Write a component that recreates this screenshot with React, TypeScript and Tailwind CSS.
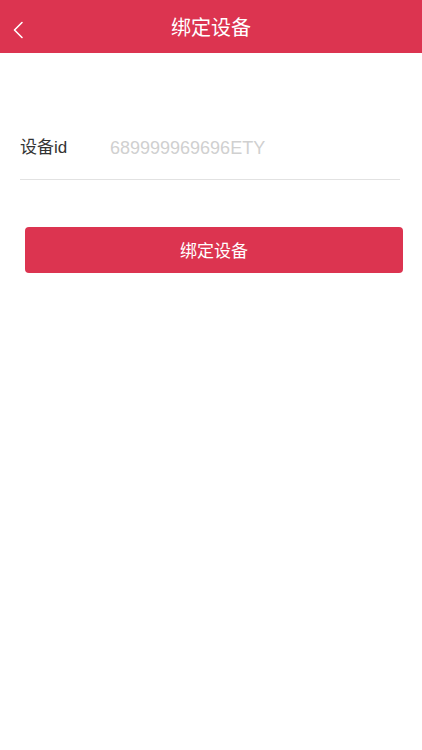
import React from "react";

function BackIcon() {
    return (
        <svg width="12" height="18" viewBox="0 0 12 18" fill="none">
            <path d="M10 1.5 L2.5 9 L10 16.5" stroke="white" strokeWidth="1.6" strokeLinecap="round" strokeLinejoin="round" />
        </svg>
    );
}

export default function App() {
    return (
        <div className="w-[422px] h-[750px] bg-white" style={{ fontFamily: '"Liberation Sans", "Noto Sans CJK SC", sans-serif' }}>
            {/* 顶部导航 */}
            <div className="h-[53px] bg-[#dc3450] flex items-center relative">
                <button className="absolute left-[12px] top-[21px]">
                    <BackIcon />
                </button>
                <h1 className="flex-1 text-center text-white text-[20px] leading-none pt-[2px]">绑定设备</h1>
            </div>

            {/* 输入区域 */}
            <div className="mt-[75px] ml-[20px] mr-[22px] border-b border-[#e2e2e2] h-[52px] flex items-start">
                <span className="w-[90px] text-[17px] text-[#333] leading-[40px]">设备id</span>
                <input
                    className="flex-1 text-[18px] leading-[40px] h-[40px] outline-none placeholder:text-[#d0d0d0]"
                    placeholder="689999969696ETY"
                />
            </div>

            {/* 绑定按钮 */}
            <div className="pl-[25px] pr-[19px] mt-[47px]">
                <button className="w-full h-[46px] rounded-[4px] bg-[#dc3450] text-white text-[17px] pt-[4px]">
                    绑定设备
                </button>
            </div>
        </div>
    );
}
